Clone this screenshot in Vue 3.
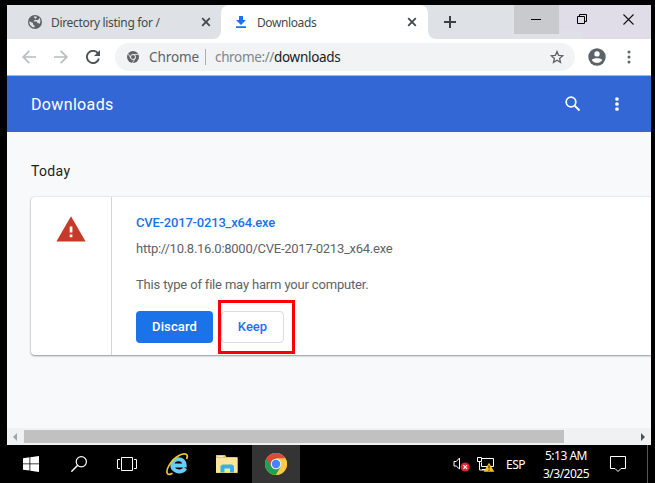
<script setup>
const url = 'http://10.8.16.0:8000/CVE-2017-0213_x64.exe'
</script>

<template>
  <div class="desktop">
    <div class="window">
      <div class="tabs">
        <div class="tab first">
          <svg class="globe" width="14" height="14" viewBox="0 0 14 14"><circle cx="7" cy="7" r="7" fill="#5f6368"/><path d="M1.300 6.200 5 8.100v1.300l1.500 1v2C3.400 12.200 1.200 9.700 1.300 6.200ZM5.700 1.500h3v1.300L7.300 3.800v1.300l-1.500.3v1.200h2.800l1.100 1.600h1.100l.8.8c1.200-2.300 1.200-4.800-.6-6.500v1.700L9.400 5.100l-1.700-.2Z" fill="#dee1e6"/></svg>
          <span class="t1">Directory listing for /</span>
          <svg class="x" width="10" height="10" viewBox="0 0 10 10"><path d="M1.200 1.200 8.800 8.800M8.800 1.200 1.200 8.800" stroke="#45494d" stroke-width="1.800"/></svg>
        </div>
        <div class="tab active">
          <svg class="dl" width="10" height="12" viewBox="0 0 10 12"><path d="M3 0h4v4h3L5 9 0 4h3ZM0 10.300h10V12H0Z" fill="#1a73e8"/></svg>
          <span class="t2">Downloads</span>
          <svg class="x" width="10" height="10" viewBox="0 0 10 10"><path d="M1.200 1.200 8.800 8.800M8.800 1.200 1.200 8.800" stroke="#45494d" stroke-width="1.800"/></svg>
        </div>
        <div class="newtab"><svg width="12" height="12" viewBox="0 0 12 12"><path d="M6 0v12M0 6h12" stroke="#3c4043" stroke-width="2"/></svg></div>
        <div class="ctl min"><svg width="10" height="10" viewBox="0 0 10 10"><path d="M0 4.500h10" stroke="#000"/></svg></div>
        <div class="ctls">
          <svg width="10" height="10" viewBox="0 0 10 10"><path d="M.5 2.500h7v7h-7ZM2.500 2.500v-2h7v7h-2" fill="none" stroke="#000"/></svg>
          <svg width="11" height="11" viewBox="0 0 11 11"><path d="m.5.5 10 10m0-10-10 10" stroke="#111" stroke-width="1.100"/></svg>
        </div>
      </div>

      <div class="toolbar">
        <svg class="back" width="14" height="14" viewBox="0 0 14 14"><path d="M14 7H1.500M7.300.8 1.200 7l6.100 6.200" fill="none" stroke="#babcbe" stroke-width="1.700"/></svg>
        <svg class="fwd" width="14" height="14" viewBox="0 0 14 14"><path d="M0 7h12.500M6.700.8 12.800 7l-6.100 6.200" fill="none" stroke="#babcbe" stroke-width="1.700"/></svg>
        <svg class="reload" width="14" height="14" viewBox="0 0 14 14"><path d="M12 3.400A6.100 6.100 0 1 0 12.900 8.500" fill="none" stroke="#4e5256" stroke-width="1.900"/><path d="M14 0v6H8Z" fill="#4e5256"/></svg>
        <div class="omnibox">
          <svg width="12" height="12" viewBox="0 0 12 12"><circle cx="6" cy="6" r="6" fill="#5f6368"/><circle cx="6" cy="6" r="2.500" fill="none" stroke="#f1f3f4" stroke-width="1"/><path d="M6 3.500h5.300M3.800 7.200 1.200 2.700M8.100 7.200l-2.600 4.600" stroke="#f1f3f4" stroke-width=".8"/></svg>
          <span class="chrome">Chrome</span><i class="sep"></i><span class="scheme">chrome://</span><span class="host">downloads</span>
          <svg class="star" width="14" height="14" viewBox="0 0 14 14"><path d="m7 1.500 1.600 3.800 4.100.4-3.100 2.700.9 4L7 10.300l-3.500 2.100.9-4-3.100-2.700 4.100-.4Z" fill="none" stroke="#5f6368" stroke-width="1.300"/></svg>
        </div>
        <svg class="user" width="18" height="18" viewBox="0 0 18 18"><circle cx="9" cy="9" r="8.700" fill="#5b6268"/><circle cx="9" cy="5.900" r="2.700" fill="#fff"/><path d="M3.800 12.300C4.600 9.700 13.400 9.700 14.200 12.300 11.800 15.700 6.200 15.700 3.800 12.300Z" fill="#fff"/></svg>
        <svg class="dots" width="4" height="14" viewBox="0 0 4 14"><g fill="#5f6368"><circle cx="2" cy="2" r="1.500"/><circle cx="2" cy="7" r="1.500"/><circle cx="2" cy="12" r="1.500"/></g></svg>
      </div>

      <header class="header">
        <h1>Downloads</h1>
        <svg width="16" height="16" viewBox="0 0 16 16"><circle cx="6" cy="6" r="4.800" fill="none" stroke="#fff" stroke-width="1.700"/><path d="m9.500 9.500 5 5" stroke="#fff" stroke-width="2"/></svg>
        <svg class="hdots" width="4" height="14" viewBox="0 0 4 14"><g fill="#fff"><circle cx="2" cy="2" r="1.850"/><circle cx="2" cy="7" r="1.850"/><circle cx="2" cy="12" r="1.850"/></g></svg>
      </header>

      <main class="page">
        <h2>Today</h2>
        <section class="card">
          <div class="warn"><svg width="30" height="26" viewBox="0 0 30 26"><path d="M15 .3 29.600 25.500H.4Z" fill="#c63a2a"/><path d="M13.700 10.500h2.700v6h-2.700Zm0 8h2.700v2.700h-2.700Z" fill="#fff"/></svg></div>
          <div class="details">
            <div class="file">CVE-2017-0213_x64.exe</div>
            <div class="url">{{ url }}</div>
            <div class="harm">This type of file may harm your computer.</div>
            <div class="actions">
              <button class="discard">Discard</button>
              <div class="mark"><button class="keep">Keep</button></div>
            </div>
          </div>
        </section>
      </main>

      <div class="scroll">
        <svg width="17" height="17" viewBox="0 0 17 17"><path d="M10 5v8L6 9Z" fill="#a3a3a3"/></svg>
        <div class="thumb"></div>
        <svg width="17" height="17" viewBox="0 0 17 17"><path d="M7 5v8l4-4Z" fill="#505050"/></svg>
      </div>
    </div>

    <footer class="taskbar">
      <div class="item"><svg width="16" height="16" viewBox="0 0 16 16"><path d="m0 2.200 6.500-.9v6.200H0Zm7.300-1L16 0v7.500H7.300ZM0 8.300h6.500v6.300L0 13.700Zm7.300 0H16V16l-8.700-1.200Z" fill="#fff"/></svg></div>
      <div class="item"><svg width="16" height="16" viewBox="0 0 16 16"><circle cx="10.300" cy="5.700" r="5.100" fill="none" stroke="#fff" stroke-width="1.200"/><path d="M6.700 9.300.4 15.700" stroke="#fff" stroke-width="1.400"/></svg></div>
      <div class="item"><svg width="20" height="14" viewBox="0 0 20 14"><path d="M4.500.5h11v13h-11ZM3 2.500H.5v9H3M17 2.500h2.500v9H17" fill="none" stroke="#fff"/></svg></div>
      <div class="item"><svg width="24" height="24" viewBox="0 0 24 24"><path d="M20.200 16.200c-2.800 5.400-12.900 3.500-12.900-2.900 0-8 12.400-8.500 12.400.3H9" fill="none" stroke="#69cdf5" stroke-width="4"/><path d="M21.500 7C24 2.300 20.300.3 14.500 3.300 6 7.700.5 17.800 2.300 21.300c.9 1.600 3 1.200 5.200 0" fill="none" stroke="#f2c52c" stroke-width="1.700"/></svg></div>
      <div class="item"><svg width="22" height="20" viewBox="0 0 22 20"><path d="M0 1h9l1.500 2H21.500v16H0Z" fill="#f4c44e"/><path d="M0 4h21.500v14.500H0Z" fill="#ffe798"/><path d="M1.500 2.500h6" stroke="#fff2b8"/><path d="M4.500 18.500v-6.500l2-1.500h9.500l2 1.500v6.500h-4v-4H8.500v4Z" fill="#37b1e8"/></svg></div>
      <div class="item on"><svg width="22" height="22" viewBox="0 0 22 22"><circle cx="11" cy="11" r="11" fill="#fcc934"/><path d="M11 11 1.500 5.500A11 11 0 0 0 11 22l4.800-8.200Z" fill="#1fa055"/><path d="M1.500 5.500A11 11 0 0 1 20.500 5.500H11v5.500L6.200 13.700Z" fill="#d94b3e"/><path d="M11 5.500h9.500A11 11 0 0 1 11 22l4.800-8.200Z" fill="#fccb45"/><circle cx="11" cy="11" r="5.300" fill="#e9eef5"/><circle cx="11" cy="11" r="4.200" fill="#4285f4"/></svg></div>
      <div class="tray">
        <svg width="18" height="18" viewBox="0 0 18 18"><path d="M1 6.500h2.200L6.500 3v11L3.200 11H1Z" fill="none" stroke="#fff"/><circle cx="12.200" cy="12" r="4.600" fill="#d9272e"/><path d="m10.400 10.200 3.600 3.600m0-3.600-3.600 3.600" stroke="#fff" stroke-width="1.200"/></svg>
        <svg class="net" width="18" height="18" viewBox="0 0 18 18"><path d="M5 3.500h11.500v8H4.500v-4M.5 2.500h4v4h-4ZM2.500 7v8H8M5 14.500h4" fill="none" stroke="#fff"/><path d="m12 7.800 5.300 8.900H6.700Z" fill="#fdc116"/><path d="M12 10.500v3m0 1v1.300" stroke="#4b3a00" stroke-width="1.300"/></svg>
        <span class="lang">ESP</span>
        <div class="clock"><span class="time">5:13 AM</span><span class="date">3/3/2025</span></div>
        <svg class="note" width="17" height="17" viewBox="0 0 17 17"><path d="M.5.5h15v12h-4.500L8 15.500 5 12.500H.5Z" fill="none" stroke="#fff"/></svg>
        <i class="peek"></i>
      </div>
    </footer>
  </div>
</template>

<style>
body { background: #000; overflow: hidden; }
</style>
<style scoped>
* { box-sizing: border-box; }
svg { display: block; flex: none; }
span, h1, h2, .file, .url, .harm { white-space: nowrap; }
.desktop { width: 655px; height: 483px; background: #000; padding: 5px 0 0 0; overflow: hidden; }
.window { width: 644px; height: 440px; margin-left: 7px; background: #f8f9fb; overflow: hidden; display: flex; flex-direction: column; }
.tabs { height: 34px; flex: none; display: flex; overflow: hidden; background: #dee1e6; font: 12px "Noto Sans", sans-serif; color: #45494d; }
.tab { display: flex; align-items: center; height: 34px; position: relative; }
.first { width: 214px; padding: 0 10px 0 21px; border-radius: 0 0 8px 0; background: #dee1e6; z-index: 1; }
.t1 { margin-left: 9px; letter-spacing: -.33px; }
.t2 { margin-left: 11px; letter-spacing: -.4px; }
.x { margin-left: auto; }
.active { width: 207px; padding: 0 11px 0 15px; background: #fff; border-radius: 8px 8px 0 0; box-shadow: -8px 16px 0 #fff, 8px 16px 0 #fff; z-index: 0; }
.newtab { width: 86px; padding-left: 16px; display: flex; align-items: center; background: #dee1e6; border-radius: 0 0 0 8px; position: relative; z-index: 1; }
.ctl { width: 45px; height: 29px; display: flex; align-items: center; justify-content: center; padding-right: 2px; }
.min { background: #c8cace; }
.ctls { flex: 1; display: flex; gap: 36px; padding: 9px 0 0 18px; background: linear-gradient(#dee1e6, #dee1e6) 0 100% / 24px 8px no-repeat #e1dde8; }
.toolbar { height: 37px; flex: none; display: flex; align-items: center; background: #fff; border-bottom: 1px solid #b5b6b8; padding: 0 0 0 15px; }
.fwd { margin-left: 18px; }
.reload { margin-left: 18px; }
.omnibox { width: 460px; height: 28px; margin-left: 15px; border-radius: 14px; background: #f1f3f4; display: flex; align-items: center; padding: 0 11px 0 12px; font: 13.500px "Noto Sans", sans-serif; color: #5f6368; }
.chrome { margin-left: 10px; width: 56px; letter-spacing: -.1px; }
.sep { width: 1px; height: 16px; background: #aaadb1; margin-right: 9px; }
.scheme { color: #80868b; width: 59px; letter-spacing: -.35px; }
.host { color: #202124; letter-spacing: -.3px; }
.star { margin-left: auto; }
.user { margin-left: 13px; }
.dots { margin-left: 21px; }
.header { height: 56px; flex: none; background: #3367d6; display: flex; align-items: center; padding-left: 24px; font-family: Roboto, sans-serif; color: #fff; }
h1 { margin: 0; width: 534px; font-size: 16px; font-weight: 400; letter-spacing: .35px; }
.hdots { margin-left: 34px; }
.page { flex: 1; padding-left: 24px; font-family: Roboto, sans-serif; }
h2 { margin: 30px 0 0; height: 35px; line-height: 19px; font-size: 14px; font-weight: 400; color: #202124; letter-spacing: .35px; }
.card { width: 680px; height: 158px; background: #fff; border-radius: 4px; display: flex; box-shadow: 0 1px 2px rgba(60,64,67,.5), 0 0 2px rgba(60,64,67,.18); }
.warn { width: 81px; border-right: 1px solid #d4d5d7; padding: 19px 0 0 25px; }
.details { padding-left: 24px; font-size: 13px; color: #5f6368; }
.file { margin-top: 17px; line-height: 18px; color: #1a73e8; font-weight: 500; letter-spacing: -.2px; }
.url { margin-top: 8px; line-height: 18px; letter-spacing: -.26px; }
.harm { margin-top: 18px; line-height: 18px; letter-spacing: -.17px; }
.actions { display: flex; padding-top: 6px; }
button { font: 500 13px Roboto, sans-serif; height: 32px; padding: 0 0 2px; border-radius: 4px; }
.discard { width: 77px; margin-top: 11px; border: 0; color: #fff; background: #1a73e8; letter-spacing: .1px; }
.mark { width: 77px; height: 54px; margin-left: 5px; border: 3px solid #fb0007; padding: 8px 0 0; }
.keep { display: block; width: 63px; border: 1px solid #dadce0; background: #fff; color: #1a73e8; }
.scroll { height: 17px; flex: none; display: flex; background: #f0f1f2; }
.thumb { width: 540px; height: 13px; margin: 2px 70px 0 0; background: #c1c1c1; }
.taskbar { height: 38px; display: flex; padding-left: 6px; color: #fff; font-family: "Noto Sans", sans-serif; }
.item { width: 49px; height: 38px; display: flex; align-items: center; justify-content: center; }
.item:nth-child(2) { width: 47px; }
.item:nth-child(4) { width: 51px; }
.item:nth-child(5) { width: 50px; padding-right: 1px; }
.on { width: 48px; background: #343434; }
.tray { flex: 1; display: flex; align-items: center; padding-left: 153px; }
.net { margin-left: 6px; }
.lang { margin-left: 11px; width: 36px; font-size: 12px; letter-spacing: -.5px; }
.clock { width: 48px; font-size: 12px; line-height: 18px; display: flex; flex-direction: column; align-items: center; letter-spacing: -.5px; padding-top: 2px; }
.note { margin-left: 20px; }
.peek { margin-left: 20px; width: 1px; height: 38px; background: #555; }
</style>
